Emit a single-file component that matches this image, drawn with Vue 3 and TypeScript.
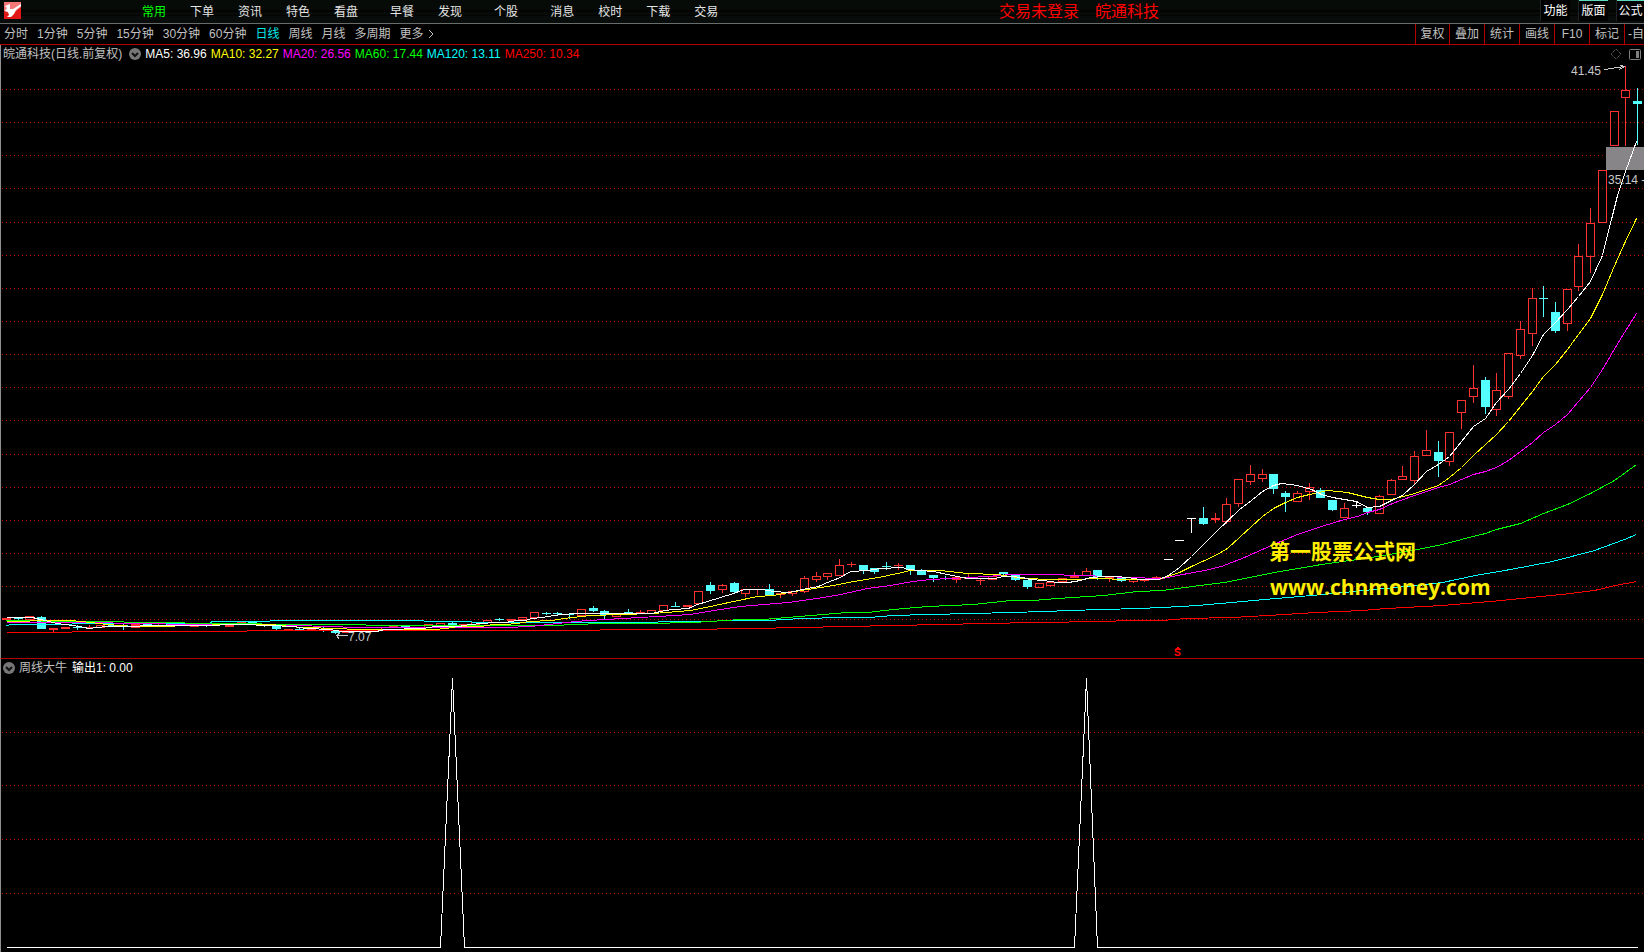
<script setup lang="ts">
interface MenuItem { label: string; wide?: boolean }
type Tone = 'up' | 'down' | 'flat'
// x, body top, body bottom, high, low, tone, solid body
type Candle = [number, number, number, number, number, Tone, boolean?]

const menu: MenuItem[] = [
  { label: '常用' }, { label: '下单' }, { label: '资讯' }, { label: '特色' },
  { label: '看盘', wide: true }, { label: '早餐' }, { label: '发现', wide: true },
  { label: '个股', wide: true }, { label: '消息' }, { label: '校时' },
  { label: '下载' }, { label: '交易' },
]
const actions = ['功能', '版面', '公式']
const periods = ['分时', '1分钟', '5分钟', '15分钟', '30分钟', '60分钟', '日线', '周线', '月线', '多周期', '更多']
const tools = ['复权', '叠加', '统计', '画线', 'F10', '标记', '-自']

const averages = [
  { id: 'ma5', text: 'MA5: 36.96' },
  { id: 'ma10', text: 'MA10: 32.27' },
  { id: 'ma20', text: 'MA20: 26.56' },
  { id: 'ma60', text: 'MA60: 17.44' },
  { id: 'ma120', text: 'MA120: 13.11' },
  { id: 'ma250', text: 'MA250: 10.34' },
]

const W = 1644
const TOP = 65
const H = 593
const gridMain = [89, 122, 155, 188, 222, 255, 288, 321, 354, 387, 420, 454, 487, 520, 553, 586, 619]
const gridSub = [732, 785, 839, 893]

const candles: Candle[] = [
  [6, 618, 619, 618, 619, 'up', true], [18, 618, 618, 618, 620, 'down', true], [29, 616, 619, 616, 619, 'up'],
  [41, 617, 628, 616, 628, 'down', true], [53, 628, 629, 628, 632, 'up', true], [65, 627, 628, 627, 628, 'up', true],
  [77, 627, 627, 625, 629, 'down', true], [89, 627, 627, 625, 628, 'up', true], [100, 625, 627, 625, 627, 'up'],
  [112, 625, 626, 624, 626, 'down', true], [123, 625, 626, 624, 629, 'down', true], [135, 624, 627, 624, 627, 'up', true],
  [147, 624, 625, 624, 626, 'down', true], [158, 625, 625, 624, 626, 'up', true], [170, 624, 624, 623, 625, 'down', true],
  [182, 625, 625, 624, 625, 'up', true], [194, 625, 626, 625, 626, 'up', true], [206, 624, 625, 623, 626, 'down', true],
  [217, 623, 624, 623, 624, 'up', true], [229, 625, 626, 625, 626, 'up', true], [241, 622, 623, 622, 623, 'up', true],
  [252, 622, 622, 622, 623, 'down', true], [264, 624, 625, 624, 626, 'down', true], [276, 626, 628, 626, 630, 'down', true],
  [288, 629, 629, 629, 629, 'up', true], [299, 629, 629, 627, 629, 'down', true], [311, 629, 629, 629, 629, 'up', true],
  [323, 629, 629, 627, 631, 'down', true], [335, 631, 632, 631, 633, 'down', true], [346, 632, 632, 632, 632, 'up', true],
  [358, 630, 631, 630, 631, 'down', true], [370, 630, 631, 630, 631, 'up', true], [381, 629, 630, 628, 630, 'up', true],
  [393, 626, 627, 626, 627, 'up', true], [405, 626, 626, 626, 626, 'down', true], [417, 627, 628, 627, 628, 'up'],
  [428, 624, 627, 624, 627, 'up'], [440, 623, 625, 623, 625, 'up'], [452, 623, 624, 622, 624, 'down', true],
  [463, 624, 625, 624, 625, 'up'], [475, 622, 624, 622, 624, 'up'], [487, 620, 622, 620, 622, 'up'],
  [499, 619, 619, 618, 620, 'down', true], [511, 619, 620, 619, 620, 'up'], [522, 617, 619, 617, 619, 'up'],
  [534, 612, 617, 612, 617, 'up'], [546, 613, 613, 612, 614, 'down', true], [557, 613, 613, 612, 614, 'down', true],
  [569, 614, 614, 614, 618, 'down', true], [581, 609, 615, 609, 615, 'up'], [593, 608, 610, 606, 611, 'down', true],
  [604, 611, 614, 610, 618, 'down', true], [616, 614, 616, 614, 616, 'up'], [628, 612, 613, 609, 613, 'down', true],
  [640, 612, 613, 610, 613, 'up', true], [651, 610, 613, 610, 613, 'up'], [663, 605, 610, 605, 610, 'up'],
  [675, 606, 606, 602, 606, 'down', true], [687, 605, 606, 605, 606, 'up', true], [698, 591, 603, 591, 603, 'up'],
  [710, 585, 590, 582, 593, 'down', true], [722, 585, 589, 584, 592, 'up'], [734, 583, 591, 582, 592, 'down', true],
  [745, 589, 593, 589, 596, 'up'], [757, 589, 589, 589, 594, 'up'], [769, 589, 594, 584, 594, 'down', true],
  [780, 593, 594, 593, 597, 'up', true], [792, 591, 593, 591, 595, 'up'], [804, 578, 591, 576, 592, 'up'],
  [816, 576, 579, 572, 581, 'up'], [827, 573, 576, 573, 579, 'up'], [839, 565, 575, 559, 575, 'up'],
  [851, 564, 564, 562, 566, 'up'], [863, 565, 569, 565, 573, 'down', true], [874, 568, 571, 568, 573, 'down', true],
  [886, 566, 566, 562, 569, 'down'], [898, 565, 565, 563, 569, 'up'], [910, 565, 569, 565, 574, 'down', true],
  [921, 570, 574, 569, 574, 'down', true], [933, 575, 577, 575, 581, 'down', true], [945, 578, 578, 576, 579, 'down'],
  [956, 577, 579, 577, 582, 'up', true], [968, 578, 578, 573, 578, 'up'], [980, 580, 580, 579, 584, 'up'],
  [992, 576, 579, 576, 579, 'up'], [1003, 572, 573, 572, 574, 'down', true], [1015, 575, 579, 575, 580, 'down', true],
  [1027, 580, 586, 580, 588, 'down', true], [1039, 583, 587, 583, 587, 'up'], [1050, 582, 585, 581, 586, 'up'],
  [1062, 578, 581, 578, 581, 'up'], [1074, 576, 577, 572, 577, 'up', true], [1086, 571, 575, 568, 575, 'up'],
  [1097, 570, 576, 570, 579, 'down', true], [1109, 577, 578, 577, 581, 'up', true], [1121, 578, 580, 578, 581, 'down', true],
  [1133, 579, 581, 579, 582, 'up'], [1144, 579, 580, 579, 581, 'up', true], [1156, 577, 579, 576, 579, 'up', true],
  [1168, 559, 559, 559, 559, 'flat'], [1179, 540, 540, 540, 540, 'flat'], [1191, 518, 518, 518, 532, 'flat'],
  [1203, 518, 523, 507, 524, 'down', true], [1215, 518, 519, 513, 522, 'up', true], [1226, 504, 521, 498, 523, 'up'],
  [1238, 479, 503, 479, 506, 'up'], [1250, 474, 481, 465, 484, 'up'], [1262, 474, 478, 469, 481, 'up'],
  [1273, 474, 488, 474, 493, 'down', true], [1285, 493, 496, 491, 511, 'down', true], [1297, 493, 501, 491, 501, 'up'],
  [1309, 487, 491, 483, 499, 'up'], [1320, 490, 497, 488, 497, 'down', true], [1332, 500, 509, 500, 510, 'down', true],
  [1344, 508, 517, 503, 517, 'up'], [1356, 505, 505, 501, 507, 'flat'], [1367, 508, 511, 508, 514, 'down', true],
  [1379, 496, 513, 495, 513, 'up'], [1391, 480, 494, 479, 494, 'up'], [1402, 476, 479, 466, 479, 'up'],
  [1414, 456, 480, 451, 483, 'up'], [1426, 450, 455, 430, 455, 'up'], [1438, 452, 460, 441, 476, 'down', true],
  [1449, 432, 461, 432, 465, 'up'], [1461, 400, 412, 400, 428, 'up'], [1473, 388, 396, 365, 402, 'up'],
  [1485, 380, 406, 377, 413, 'down', true], [1496, 390, 409, 373, 415, 'up'], [1508, 353, 396, 353, 398, 'up'],
  [1520, 329, 355, 321, 358, 'up'], [1532, 298, 333, 288, 345, 'up'], [1543, 298, 298, 286, 316, 'down'],
  [1555, 312, 330, 302, 332, 'down', true], [1567, 289, 323, 289, 330, 'up'], [1578, 256, 286, 244, 290, 'up'],
  [1590, 223, 256, 208, 272, 'up'], [1602, 170, 222, 170, 222, 'up'], [1614, 111, 145, 111, 145, 'up'],
  [1625, 90, 97, 66, 145, 'up'], [1637, 101, 103, 88, 144, 'down', true],
]

const lines = [
  { id: 'ma250', points: '6,632 71,632 72,631 246,631 247,630 599,630 600,629 716,629 717,628 775,628 776,627 822,627 823,626 869,626 870,625 916,625 917,624 962,624 963,623 1009,623 1010,622 1068,622 1069,621 1115,621 1116,620 1162,620 1185,618 1232,617 1267,615 1316,612 1362,610 1386,608 1442,605 1490,601 1531,597 1570,593 1594,590 1615,585 1636,581' },
  { id: 'ma120', points: '6,625 12,624 71,624 72,623 210,623 211,621 269,621 270,620 423,620 424,621 517,622 657,622 658,621 716,621 717,620 775,620 776,619 810,618 833,617 868,617 893,615 927,614 973,613 1010,612 1045,611 1068,610 1103,609 1138,608 1162,607 1197,605 1231,602 1264,599 1311,595 1344,592 1384,588 1417,585 1442,582 1475,575 1510,569 1552,561 1594,550 1624,539 1636,534' },
  { id: 'ma60', points: '6,620 72,621 118,621 128,622 240,623 283,624 365,624 366,625 540,625 587,624 588,623 646,623 693,622 740,619 762,619 787,617 822,614 847,612 867,612 893,609 927,606 973,604 1010,600 1033,600 1057,598 1103,595 1137,591 1162,590 1192,586 1224,582 1274,572 1321,564 1371,557 1417,549 1442,544 1461,539 1485,533 1496,529 1520,523 1543,513 1567,504 1590,493 1614,480 1636,464' },
  { id: 'ma20', points: '6,622 95,622 130,623 200,624 235,624 283,625 340,626 345,627 505,627 530,626 575,621 588,620 622,618 657,616 690,614 720,609 740,606 788,602 823,597 840,594 867,588 890,585 912,581 930,579 950,578 987,576 1010,574 1043,574 1083,575 1127,577 1162,578 1177,575 1204,570 1221,566 1244,557 1273,544 1297,534 1321,526 1344,519 1357,516 1367,512 1379,509 1392,503 1414,495 1438,487 1449,484 1473,474 1485,471 1496,467 1508,460 1520,451 1532,442 1543,432 1555,424 1567,414 1578,401 1590,387 1602,369 1612,352 1624,332 1636,313' },
  { id: 'ma10', points: '6,621 24,621 36,620 71,620 90,622 107,624 133,626 163,626 187,625 237,624 270,624 300,627 340,628 353,629 433,629 446,628 458,626 480,626 493,624 505,624 517,623 528,621 552,620 563,618 590,615 653,613 690,610 710,606 733,601 757,596 773,595 788,592 807,589 833,585 853,581 878,577 897,573 910,570 940,570 967,573 997,574 1010,576 1022,578 1053,579 1078,579 1093,578 1130,579 1158,579 1167,576 1179,572 1191,566 1215,555 1227,548 1239,537 1251,526 1262,516 1273,508 1285,502 1297,497 1309,494 1327,490 1347,492 1367,497 1379,499 1391,499 1414,493 1438,485 1449,477 1461,467 1473,455 1485,444 1496,434 1508,421 1520,406 1532,391 1543,376 1555,364 1567,349 1578,334 1590,318 1602,294 1612,270 1624,243 1636,218' },
  { id: 'ma5', points: '6,617 32,617 40,619 57,623 72,625 84,627 88,628 106,626 130,626 150,625 200,625 240,624 270,625 293,626 306,628 330,629 341,631 376,631 384,629 423,628 434,626 458,626 470,624 482,623 493,622 505,622 517,620 525,620 531,618 542,617 553,615 563,614 575,613 651,613 665,610 673,609 688,608 697,604 707,601 720,597 733,593 744,589 762,589 773,591 788,592 807,588 818,586 827,582 840,577 850,571 868,570 880,568 902,567 907,569 933,571 947,574 962,577 968,578 995,578 1002,576 1010,576 1022,577 1030,579 1043,580 1057,582 1068,582 1080,580 1090,577 1103,576 1115,576 1127,577 1140,579 1158,579 1168,575 1179,567 1191,556 1215,532 1239,509 1251,500 1262,491 1273,485 1281,483 1297,485 1311,489 1321,494 1332,497 1356,501 1367,507 1379,506 1391,500 1402,495 1414,484 1426,471 1438,464 1449,456 1461,441 1473,426 1485,418 1496,402 1508,389 1520,373 1532,355 1543,334 1555,322 1567,309 1578,296 1590,281 1602,255 1611,219 1617,195 1625,171 1636,141' },
]

const notes = [
  { text: '41.45', x: 1571, y: 71, kind: 'price' },
  { text: '35.14 -', x: 1608, y: 180, kind: 'price' },
  { text: '7.07', x: 348, y: 637, kind: 'price' },
  { text: 'S', x: 1174, y: 653, kind: 'signal' },
  { text: '第一股票公式网', x: 1269, y: 552, kind: 'brand' },
  { text: 'www.chnmoney.com', x: 1270, y: 587, kind: 'site' },
]
const place = (x: number, y: number) => ({ left: `${(x / W) * 100}%`, top: `${((y - TOP) / H) * 100}%` })
</script>

<template>
  <main class="terminal">
    <header class="menubar">
      <svg class="logo" viewBox="0 0 17 17" aria-hidden="true">
        <rect width="17" height="17" fill="#e01818" />
        <path d="M0 0H17V5L12 9 8 12 0 9Z" fill="#f47878" />
        <path d="M1 4L6 2 6 7 9 7 17 2 17 4 12 8 10 12 7 15 3 15 5 13 4 10 1 9 3 6Z" fill="#fff" />
      </svg>
      <nav class="menu">
        <button v-for="(m, i) in menu" :key="m.label" type="button" :class="{ wide: m.wide, active: i === 0 }">{{ m.label }}</button>
      </nav>
      <p class="status"><span>交易未登录</span><span>皖通科技</span></p>
      <div class="actions">
        <button v-for="a in actions" :key="a" type="button">{{ a }}</button>
      </div>
    </header>

    <div class="toolbar">
      <nav class="periods">
        <button v-for="p in periods" :key="p" type="button" :class="{ current: p === '日线' }">{{ p }}</button>
        <svg class="more" viewBox="0 0 6 10" aria-hidden="true"><path d="M1 1L5 5 1 9" /></svg>
      </nav>
      <div class="tools">
        <button v-for="t in tools" :key="t" type="button">{{ t }}</button>
      </div>
    </div>

    <section class="pane price-pane">
      <div class="legend">
        <span class="stock">皖通科技(日线.前复权)</span>
        <button class="toggle" type="button" aria-label="指标">
          <svg viewBox="0 0 12 12"><circle cx="6" cy="6" r="6" /><path d="M3 5L6 8 9 5" /></svg>
        </button>
        <span v-for="a in averages" :key="a.id" :class="['value', a.id]">{{ a.text }}</span>
        <svg class="corner" viewBox="0 0 32 12" aria-hidden="true">
          <path d="M6 1L11 6 6 11 1 6Z" stroke-dasharray="1 1" />
          <rect x="19.5" y="1.5" width="11" height="10" rx="1" />
          <rect class="solid" x="26" y="3" width="3" height="7" />
        </svg>
      </div>
      <div class="plot">
        <svg :viewBox="`0 ${TOP} ${W} ${H}`" preserveAspectRatio="none" aria-hidden="true">
          <g class="crisp" transform="translate(.5 .5)">
            <line v-for="y in gridMain" :key="y" class="grid" x1="1.5" :x2="W" :y1="y" :y2="y" />
            <rect class="marker" x="1605.5" y="146.5" width="40" height="23" />
            <g v-for="c in candles" :key="c[0]" :class="['candle', c[5]]">
              <path v-if="c[3] < c[1]" :d="`M${c[0]} ${c[3] - 0.5}V${c[1]}`" />
              <path v-if="c[4] > c[2]" :d="`M${c[0]} ${c[2]}V${c[4] + 0.5}`" />
              <path v-if="c[1] === c[2]" :d="`M${c[0] - 4.5} ${c[1]}h9`" />
              <rect v-else :class="{ solid: c[6] }" :x="c[0] - 4" :y="c[1]" width="8" :height="c[2] - c[1]" />
            </g>
            <polyline v-for="l in lines" :key="l.id" :class="['line', l.id]" :points="l.points" />
            <path class="pointer" d="M1604 69L1624 66M1618 64L1624 66 1619 69M347 635H336M340 632L336 635 339 639" />
            <path class="signal-cap" d="M1174 649.5L1177.500 646 1181 649.500Z" />
          </g>
        </svg>
        <span v-for="n in notes" :key="n.text" :class="['note', n.kind]" :style="place(n.x, n.y)">{{ n.text }}</span>
      </div>
    </section>

    <section class="pane signal-pane">
      <div class="legend">
        <button class="toggle" type="button" aria-label="指标">
          <svg viewBox="0 0 12 12"><circle cx="6" cy="6" r="6" /><path d="M3 5L6 8 9 5" /></svg>
        </button>
        <span class="stock">周线大牛</span>
        <span class="output">输出1: 0.00</span>
      </div>
      <div class="plot">
        <svg viewBox="0 677 1644 275" preserveAspectRatio="none" aria-hidden="true">
          <g class="crisp" transform="translate(.5 .5)">
            <line v-for="y in gridSub" :key="y" class="grid" x1="1.5" :x2="W" :y1="y" :y2="y" />
            <polyline class="line ma5" points="6,947 440,947 452,678 464,947 1074,947 1086,678 1097,947 1637,947" />
          </g>
        </svg>
      </div>
    </section>
  </main>
</template>

<style>
body { margin: 0; background: #000; }
</style>

<style scoped>
.terminal {
  box-sizing: border-box;
  height: 100vh;
  min-height: 480px;
  display: flex;
  flex-direction: column;
  overflow: hidden;
  background: #000;
  color: #c0c0c0;
  font-family: "Liberation Sans", "Noto Sans CJK SC", sans-serif;
  font-size: 12px;
  line-height: 18px;
  white-space: nowrap;
}
button {
  padding: 0;
  border: 0;
  background: none;
  color: inherit;
  font: inherit;
  flex-shrink: 0;
  cursor: pointer;
}
.menubar {
  display: flex;
  align-items: center;
  height: 23px;
  border-bottom: 1px solid #686c6a;
  background: linear-gradient(#070b08 0 10px, #020302 10px 12px, #070b08 12px 15px, #020302 15px 16px, #080c0a 16px);
}
.logo { width: 17px; height: 17px; margin-left: 4px; margin-bottom: 2px; flex-shrink: 0; }
.menu { display: flex; flex: 1; min-width: 0; margin-left: 109px; color: #e4e4e4; overflow: hidden; }
.menu button { padding: 0 12px; }
.menu .wide { margin-right: 8px; }
.menu .active { color: #00ff00; }
.status { display: flex; gap: 16px; margin: 0; color: #ff0000; font-size: 16px; line-height: 22px; }
.actions {
  display: flex;
  justify-content: flex-end;
  align-self: stretch;
  gap: 8px;
  width: 485px;
  color: #fff;
}
.actions button { width: 30px; height: 21px; line-height: 23px; background: #000; border-left: 1px solid #222; box-sizing: border-box; }
.actions button:last-child { width: 28px; }
.actions button:nth-child(n + 2) { box-shadow: inset 0 1px #5fd8c0; }
.toolbar { display: flex; height: 20px; border-bottom: 1px solid #b40000; }
.periods { display: flex; flex: 1; min-width: 0; gap: 9px; align-items: center; padding-left: 4px; overflow: hidden; }
.periods .current { color: #00e8e8; }
.more { width: 6px; height: 10px; margin-left: -5px; fill: none; stroke: #c0c0c0; }
.tools { display: flex; }
.tools button { width: 35px; border-left: 1px solid #b40000; box-sizing: border-box; overflow: hidden; }
.tools button:first-child { width: 34px; }
.tools button:last-child { width: 20px; text-align: left; padding-left: 3px; }
.pane { display: flex; flex-direction: column; min-height: 0; box-sizing: border-box; border-left: 1px solid #909090; }
.price-pane { flex: 613 1 0; }
.signal-pane { flex: 293 1 0; border-top: 1px solid #b40000; }
.legend { display: flex; align-items: center; flex-shrink: 0; height: 20px; padding-left: 2px; gap: 4px; }
.legend .stock { margin-right: 1px; }
.price-pane .legend { padding-bottom: 2px; box-sizing: border-box; }
.price-pane .stock { margin-right: 3px; }
.signal-pane .legend { height: 18px; }
.toggle { display: block; width: 12px; height: 12px; line-height: 0; }
.toggle svg { width: 12px; height: 12px; }
.toggle circle { fill: #777; }
.toggle path { fill: none; stroke: #111; stroke-width: 2; }
.output { color: #fff; }
.corner { width: 32px; height: 12px; margin-left: auto; margin-right: 2px; fill: none; stroke: #808080; }
.corner .solid { fill: #808080; stroke: none; }
.plot { position: relative; flex: 1; min-height: 0; margin-left: -1px; overflow: hidden; }
.plot svg { display: block; width: 100%; height: 100%; }
.crisp { shape-rendering: crispEdges; }
.grid { stroke: #c00000; stroke-dasharray: 1 3; }
.marker { fill: #888588; }
.candle { fill: none; }
.candle.up { stroke: #ff3232; }
.candle.down { stroke: #54ffff; }
.candle.flat { stroke: #fff; }
.candle.up .solid { fill: #ff3232; }
.candle.down .solid { fill: #54ffff; }
.line { fill: none; }
.value.ma5 { color: #fff; }
.value.ma10 { color: #ffff00; }
.value.ma20 { color: #ff00ff; }
.value.ma60 { color: #00ff00; }
.value.ma120 { color: #00ffff; }
.value.ma250 { color: #ff0000; }
.line.ma5 { stroke: #fff; }
.line.ma10 { stroke: #ffff00; }
.line.ma20 { stroke: #ff00ff; }
.line.ma60 { stroke: #00ff00; }
.line.ma120 { stroke: #00ffff; }
.line.ma250 { stroke: #ff0000; }
.pointer { fill: none; stroke: #c8c8c8; }
.signal-cap { fill: #ff0000; }
.note { position: absolute; transform: translateY(-50%); color: #c8c8c8; }
.note.signal { color: #ff0000; font-size: 10px; font-weight: 700; line-height: 12px; }
.note.brand, .note.site { color: #ffee00; font-weight: 700; line-height: 28px; }
.note.brand { font-size: 21px; }
.note.site { font-family: "Open Sans", sans-serif; font-size: 21px; }
</style>
